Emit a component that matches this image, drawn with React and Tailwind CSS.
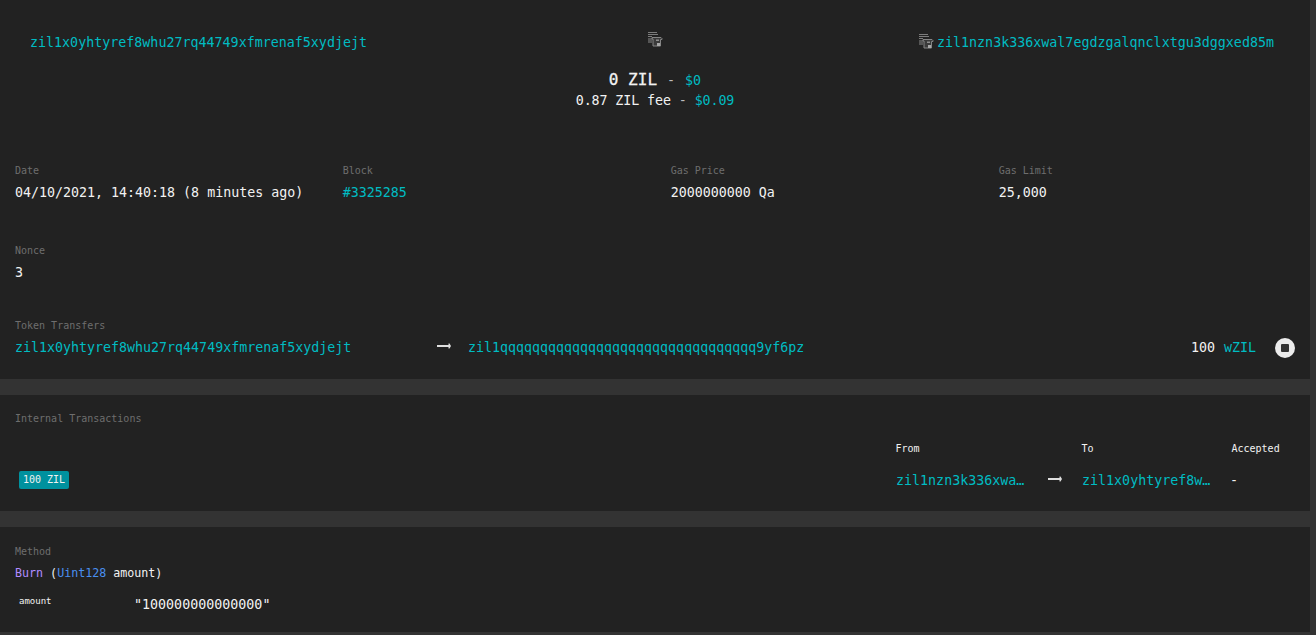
const teal = "text-[#00bcc2]";

function CopyIcon({ className = "" }) {
  return (
    <svg width="16" height="16" viewBox="0 0 16 16" className={`shrink-0 ${className}`}>
      <g fill="none" stroke="#7c7c7c" strokeWidth="1">
        <path d="M1 1.5h9M1 3.5h10M1 5.5h4" />
      </g>
      <rect x="1" y="7" width="4" height="5" fill="#555555" />
      <path d="M5 6.5h9l1 1v1h-1.5v6.5H6V8H5z" fill="#3a3a3a" stroke="#858585" strokeWidth="1" />
      <rect x="9" y="8.5" width="3" height="1.5" fill="#8e8e8e" />
      <rect x="10" y="12" width="3" height="3" fill="#a8a8a8" />
    </svg>
  );
}

function Arrow({ className = "" }) {
  return (
    <svg width="14" height="6" viewBox="0 0 14 6" className={`shrink-0 mb-[5px] ${className}`}>
      <path d="M0 2h12v2H0z" fill="#dedede" />
      <path d="M11.5 .5h1l1.5 2.5-1.5 2.5h-1z" fill="#dedede" />
    </svg>
  );
}

function Field({ label, children }) {
  return (
    <div>
      <div className="text-[10px] leading-[12px] text-[#6e6e6e]">{label}</div>
      <div className="mt-[6px] text-[13.3px] leading-[20px] text-[#f2f2f2]">{children}</div>
    </div>
  );
}

export default function App() {
  return (
    <div className="h-[635px] w-[1316px] overflow-hidden bg-[#333333] font-['DejaVu_Sans_Mono',monospace]">
      <div className="w-[1310px]">
        <section className="h-[379px] bg-[#222222] px-[15px] pt-[33px]">
          <div className="flex h-[20px] items-center pl-[15px] pr-[21px] text-[13.33px] leading-[20px]">
            <span className={`${teal} w-[617px]`}>zil1x0yhtyref8whu27rq44749xfmrenaf5xydjejt</span>
            <CopyIcon className="mb-[8px]" />
            <span className="flex-1" />
            <CopyIcon className="mb-[4px]" />
            <span className={`${teal} ml-[3px]`}>zil1nzn3k336xwal7egdzgalqnclxtgu3dggxed85m</span>
          </div>
          <div className="mt-[19px] text-center text-[#f2f2f2]">
            <div className="h-[16px] text-[13.33px] leading-[16px]">
              <span className="text-[16px] [-webkit-text-stroke:0.3px_#f2f2f2]">0 ZIL</span>
              <span className="ml-[2px] mr-[2px] text-[#bdbdbd]"> - </span>
              <span className={teal}>$0</span>
            </div>
            <div className="mt-[5px] text-[13.33px] leading-[16px] tracking-[-0.1px]">
              0.87 ZIL fee<span className="text-[#bdbdbd]"> - </span><span className={teal}>$0.09</span>
            </div>
          </div>

          <div className="mt-[56px] grid grid-cols-[327.67px_328px_328px_1fr]">
            <Field label="Date">04/10/2021, 14:40:18 (8 minutes ago)</Field>
            <Field label="Block"><span className={teal}>#3325285</span></Field>
            <Field label="Gas Price">2000000000 Qa</Field>
            <Field label="Gas Limit">25,000</Field>
          </div>

          <div className="mt-[42px]">
            <Field label="Nonce">3</Field>
          </div>

          <div className="mt-[37px] text-[10px] leading-[12px] text-[#6e6e6e]">Token Transfers</div>
          <div className="mt-[6px] flex h-[20px] items-center text-[13.3px] leading-[20px]">
            <span className={`${teal} w-[422px]`}>zil1x0yhtyref8whu27rq44749xfmrenaf5xydjejt</span>
            <Arrow />
            <span className={`${teal} ml-[17px] w-[723px]`}>zil1qqqqqqqqqqqqqqqqqqqqqqqqqqqqqqqq9yf6pz</span>
            <span className="text-[#f2f2f2]">100</span>
            <span className={`${teal} ml-[9px]`}>wZIL</span>
            <span className="ml-[19px] flex h-[20px] w-[20px] items-center justify-center rounded-full bg-[#ececec]">
              <span className="h-[8px] w-[8px] rounded-[1px] bg-[#333333]" />
            </span>
          </div>
        </section>

        <section className="mt-[16px] h-[116px] bg-[#222222] px-[15px] pt-[18px]">
          <div className="text-[10px] leading-[12px] text-[#6e6e6e]">Internal Transactions</div>
          <div className="mt-[18px] flex h-[12px] pl-[880.5px] text-[10px] leading-[12px] text-[#f2f2f2]">
            <span className="w-[186px]">From</span>
            <span className="w-[150px]">To</span>
            <span>Accepted</span>
          </div>
          <div className="mt-[16px] flex h-[20px] items-center text-[13.33px] leading-[20px]">
            <span className="mb-[2px] ml-[4px] flex h-[18px] w-[50px] items-center justify-center rounded-[2px] bg-[#00919e] text-[10px] text-[#f2f2f2]">100 ZIL</span>
            <span className={`${teal} ml-[827px] w-[152px]`}>zil1nzn3k336xwa…</span>
            <Arrow />
            <span className={`${teal} ml-[20px] w-[152px]`}>zil1x0yhtyref8w…</span>
            <span className="-ml-[4px] text-[#f2f2f2]">-</span>
          </div>
        </section>

        <section className="mt-[16px] h-[105px] bg-[#222222] px-[15px] pt-[19px]">
          <div className="text-[10px] leading-[12px] text-[#6e6e6e]">Method</div>
          <div className="mt-[5px] text-[11.67px] leading-[20px] text-[#f2f2f2]">
            <span className="text-[#b18cff]">Burn</span> (<span className="text-[#4a90f0]">Uint128</span> amount)
          </div>
          <div className="mt-[12px] flex h-[20px] items-center pl-[4px]">
            <span className="mb-[6px] w-[116px] text-[9px] text-[#f2f2f2]">amount</span>
            <span className="-ml-[1px] text-[13.33px] text-[#f2f2f2]">"100000000000000"</span>
          </div>
        </section>
      </div>
    </div>
  );
}
